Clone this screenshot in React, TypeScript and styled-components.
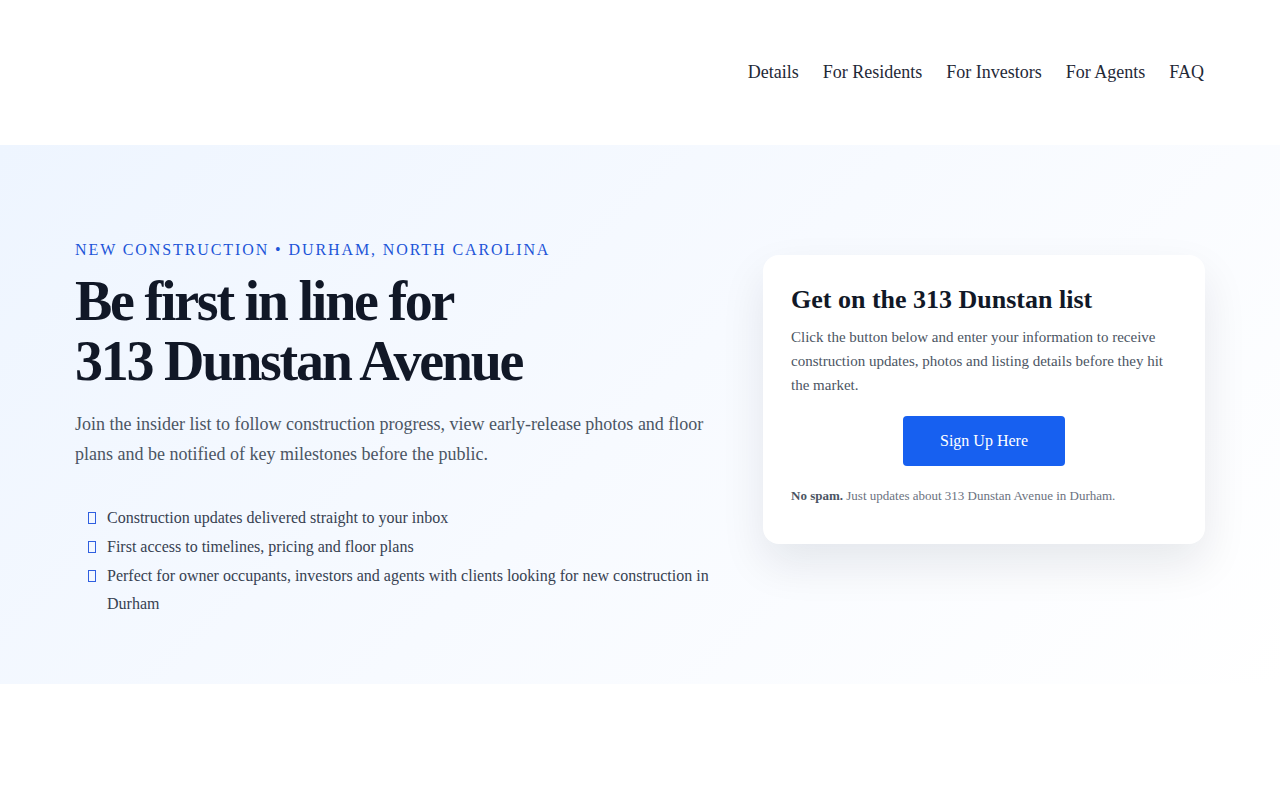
import styled, { createGlobalStyle } from "styled-components";

const GlobalStyle = createGlobalStyle`
  * {
    box-sizing: border-box;
  }
  body {
    margin: 0;
    background: #ffffff;
    font-family: "Liberation Serif", "Times New Roman", serif;
    color: #111827;
  }
`;

const Header = styled.header`
  height: 145px;
  display: flex;
  align-items: center;
  justify-content: flex-end;
  padding: 0 76px 0 75px;
`;

const Nav = styled.nav`
  display: flex;
  gap: 24px;
`;

const NavLink = styled.a`
  font-size: 18px;
  color: #1f2937;
  text-decoration: none;
  cursor: pointer;
`;

const Hero = styled.section`
  height: 539px;
  padding: 93px 75px 0;
  background: linear-gradient(135deg, #eef5ff 0%, #f7faff 50%, #ffffff 100%);
`;

const Grid = styled.div`
  display: grid;
  grid-template-columns: 640px 442px;
  gap: 48px;
  align-items: start;
`;

const Copy = styled.div`
  display: flex;
  flex-direction: column;
`;

const Eyebrow = styled.p`
  margin: 0;
  font-size: 16px;
  line-height: 24px;
  letter-spacing: 0.119em;
  color: #1d55d8;
  text-transform: uppercase;
`;

const Title = styled.h1`
  margin: 9px 0 0;
  font-size: 56px;
  line-height: 60px;
  font-weight: 700;
  letter-spacing: -0.04em;
  color: #111827;
`;

const Lead = styled.p`
  margin: 18px 0 0;
  font-size: 18px;
  line-height: 30px;
  color: #4b5563;
`;

const List = styled.ul`
  list-style: none;
  margin: 35px 0 0;
  padding: 0 0 0 13px;
  display: flex;
  flex-direction: column;
`;

const Item = styled.li`
  display: flex;
  align-items: flex-start;
  gap: 11px;
  font-size: 16px;
  line-height: 28.8px;
  color: #374151;
`;

const Glyph = styled.span`
  flex: none;
  width: 8px;
  height: 12px;
  margin-top: 8px;
  border: 1px solid #2f5fe0;
`;

const Card = styled.div`
  margin-top: 17px;
  background: #ffffff;
  border-radius: 16px;
  padding: 28px 28px 38px;
  box-shadow: 0 20px 45px rgba(15, 23, 42, 0.09);
`;

const CardTitle = styled.h2`
  margin: 0;
  font-size: 26px;
  line-height: 34px;
  font-weight: 700;
  color: #111827;
`;

const CardText = styled.p`
  margin: 8px 0 0;
  font-size: 15px;
  line-height: 24px;
  color: #4b5563;
`;

const ButtonRow = styled.div`
  display: flex;
  justify-content: center;
  margin-top: 19px;
`;

const Button = styled.button`
  width: 162px;
  height: 50px;
  border: none;
  border-radius: 4px;
  background: #1760f0;
  color: #ffffff;
  font-family: inherit;
  font-size: 16px;
  cursor: pointer;
`;

const Note = styled.p`
  margin: 20px 0 0;
  font-size: 13px;
  line-height: 20px;
  color: #6b7280;

  strong {
    color: #4b5563;
  }
`;

const perks = [
  "Construction updates delivered straight to your inbox",
  "First access to timelines, pricing and floor plans",
  "Perfect for owner occupants, investors and agents with clients looking for new construction in Durham",
];

function App() {
  return (
    <>
      <GlobalStyle />
      <Header>
        <Nav>
          <NavLink>Details</NavLink>
          <NavLink>For Residents</NavLink>
          <NavLink>For Investors</NavLink>
          <NavLink>For Agents</NavLink>
          <NavLink>FAQ</NavLink>
        </Nav>
      </Header>
      <Hero>
        <Grid>
          <Copy>
            <Eyebrow>New Construction • Durham, North Carolina</Eyebrow>
            <Title>
              Be first in line for
              <br />
              313 Dunstan Avenue
            </Title>
            <Lead>
              Join the insider list to follow construction progress, view
              early-release photos and floor plans and be notified of key
              milestones before the public.
            </Lead>
            <List>
              {perks.map((perk) => (
                <Item key={perk}>
                  <Glyph />
                  <span>{perk}</span>
                </Item>
              ))}
            </List>
          </Copy>
          <Card>
            <CardTitle>Get on the 313 Dunstan list</CardTitle>
            <CardText>
              Click the button below and enter your information to receive
              construction updates, photos and listing details before they hit
              the market.
            </CardText>
            <ButtonRow>
              <Button>Sign Up Here</Button>
            </ButtonRow>
            <Note>
              <strong>No spam.</strong> Just updates about 313 Dunstan Avenue
              in Durham.
            </Note>
          </Card>
        </Grid>
      </Hero>
    </>
  );
}

export default App;
